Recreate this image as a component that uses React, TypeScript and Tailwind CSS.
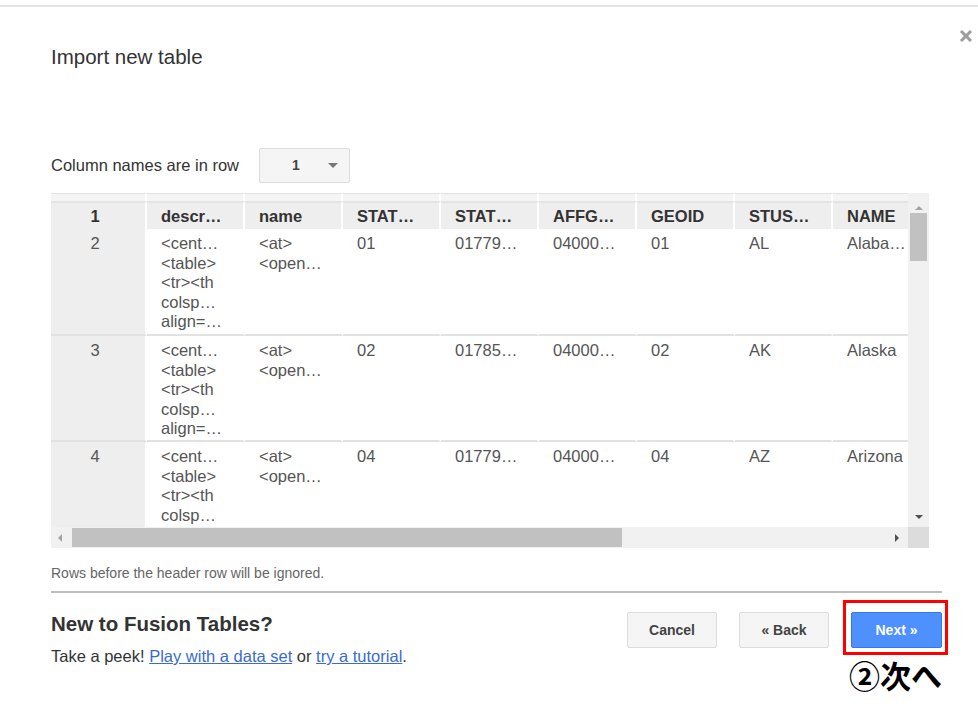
import React from 'react';

const font = { fontFamily: '"Liberation Sans", Arial, sans-serif' };

const headers = ['1', 'descr…', 'name', 'STAT…', 'STAT…', 'AFFG…', 'GEOID', 'STUS…', 'NAME'];

const descr = ['<cent…', '<table>', '<tr><th', 'colsp…', 'align=…'];
const nameCell = ['<at>', '<open…'];

const rows = [
  { n: '2', cells: ['01', '01779…', '04000…', '01', 'AL', 'Alaba…'], h: 'h-[107px]' },
  { n: '3', cells: ['02', '01785…', '04000…', '02', 'AK', 'Alaska'], h: 'h-[106px]' },
  { n: '4', cells: ['04', '01779…', '04000…', '04', 'AZ', 'Arizona'], h: 'h-[106px]' },
];

const colW = ['w-[96px]', 'w-[98px]', 'w-[98px]', 'w-[98px]', 'w-[98px]', 'w-[98px]', 'w-[98px]', 'w-[98px]', 'w-[98px]'];

function Cell({ i, children, className = '' }: { i: number; children: React.ReactNode; className?: string }) {
  return (
    <div className={`${colW[i]} shrink-0 border-r-2 border-white ${className}`}>{children}</div>
  );
}

const bodyText = 'border-b-2 border-b-[#e2e2e2] text-[16.5px] text-[#555] leading-[19.5px] pt-[5px] whitespace-nowrap';

function DataTable() {
  return (
    <div className="w-[878px] h-[355px] flex flex-col">
      <div className="flex h-[334px]">
        {/* grid */}
        <div className="w-[857px] overflow-hidden">
          <div className="w-[960px]">
            {/* top strip */}
            <div className="flex h-[8px]">
              {headers.map((_, i) => (
                <Cell key={i} i={i} className="bg-[#f5f5f5] border-t border-t-[#e2e2e2]">{null}</Cell>
              ))}
            </div>
            {/* header */}
            <div className="flex h-[28px]">
              {headers.map((h, i) => (
                <Cell
                  key={i}
                  i={i}
                  className={`bg-[#eeeeee] border-t-2 border-t-[#e4e4e4] font-bold text-[16.5px] text-[#333] leading-[26px] whitespace-nowrap ${i === 0 ? 'text-center pr-[6px]' : 'pl-[14px]'}`}
                >
                  {h}
                </Cell>
              ))}
            </div>
            {rows.map((r) => (
              <div key={r.n} className={`flex ${r.h}`}>
                <Cell i={0} className={`bg-[#eeeeee] text-center pr-[6px] ${bodyText}`}>
                  {r.n}
                </Cell>
                <Cell i={1} className={`pl-[14px] ${bodyText}`}>
                  {descr.map((d) => (
                    <div key={d}>{d}</div>
                  ))}
                </Cell>
                <Cell i={2} className={`pl-[14px] ${bodyText}`}>
                  {nameCell.map((d) => (
                    <div key={d}>{d}</div>
                  ))}
                </Cell>
                {r.cells.map((c, j) => (
                  <Cell key={j} i={j + 3} className={`pl-[14px] ${bodyText}`}>
                    {c}
                  </Cell>
                ))}
              </div>
            ))}
          </div>
        </div>
        {/* vertical scrollbar */}
        <div className="w-[21px] bg-[#f1f1f1] flex flex-col items-center">
          <svg width="10" height="6" viewBox="0 0 10 6" className="mt-[12px]">
            <path d="M1 5 L5 1 L9 5 Z" fill="#a3a3a3" />
          </svg>
          <div className="mt-[2px] w-[17px] h-[48px] bg-[#c1c1c1]" />
          <div className="flex-1" />
          <svg width="10" height="6" viewBox="0 0 10 6" className="mb-[7px]">
            <path d="M1 1 L5 5 L9 1 Z" fill="#505050" />
          </svg>
        </div>
      </div>
      {/* horizontal scrollbar */}
      <div className="flex h-[21px]">
        <div className="w-[857px] bg-[#f1f1f1] flex items-center">
          <svg width="6" height="10" viewBox="0 0 6 10" className="ml-[6px]">
            <path d="M5 1 L1 5 L5 9 Z" fill="#a3a3a3" />
          </svg>
          <div className="ml-[9px] w-[550px] h-[19px] bg-[#c1c1c1]" />
          <div className="flex-1" />
          <svg width="6" height="10" viewBox="0 0 6 10" className="mr-[8px]">
            <path d="M1 1 L5 5 L1 9 Z" fill="#505050" />
          </svg>
        </div>
        <div className="w-[21px] bg-[#dcdcdc]" />
      </div>
    </div>
  );
}

export default function App() {
  return (
    <div className="relative w-[978px] h-[709px] bg-white overflow-hidden" style={font}>
      <div className="mt-[5px] h-[2px] bg-[#e3e3e3]" />

      {/* close */}
      <button className="absolute left-[958px] top-[28px] w-[16px] h-[16px]">
        <svg width="16" height="16" viewBox="0 0 16 16">
          <path d="M3 3 L13 13 M13 3 L3 13" stroke="#9c9c9c" strokeWidth="3" />
        </svg>
      </button>

      <div className="pl-[51px] pr-[36px]">
        <h1 className="mt-[38px] text-[20.5px] leading-[24px] text-[#333]">Import new table</h1>

        <div className="mt-[79px] flex items-center">
          <span className="text-[16.5px] text-[#333]">Column names are in row</span>
          <div className="ml-[20px] w-[91px] h-[35px] bg-[#f5f5f5] border border-[#dcdcdc] rounded-[2px] flex items-center">
            <span className="ml-[32px] font-bold text-[14px] text-[#444]">1</span>
            <svg width="10" height="5" viewBox="0 0 10 5" className="ml-[28px]">
              <path d="M0 0 L10 0 L5 5 Z" fill="#777" />
            </svg>
          </div>
        </div>

        <div className="mt-[10px]">
          <DataTable />
        </div>

        <p className="mt-[17px] text-[14px] leading-[16px] text-[#666]">Rows before the header row will be ignored.</p>

        <div className="mt-[10px] h-[2px] bg-[#bdbdbd]" />

        <div className="mt-[19px] flex justify-between">
          <div>
            <h2 className="font-bold text-[20.5px] leading-[24px] text-[#333]">New to Fusion Tables?</h2>
            <p className="mt-[10px] text-[16.5px] leading-[20px] text-[#333]">
              Take a peek!{' '}
              <a className="text-[#3a6bd1] underline">Play with a data set</a> or{' '}
              <a className="text-[#3a6bd1] underline">try a tutorial</a>.
            </p>
          </div>
          <div className="flex gap-[22px]">
            <button className="w-[90px] h-[36px] bg-[#f5f5f5] border border-[#dcdcdc] rounded-[2px] font-bold text-[14px] text-[#444]">
              Cancel
            </button>
            <button className="w-[90px] h-[36px] bg-[#f5f5f5] border border-[#dcdcdc] rounded-[2px] font-bold text-[14px] text-[#444]">
              « Back
            </button>
            <div className="relative">
              <button className="w-[91px] h-[36px] bg-[#4d90fe] border border-[#3079ed] rounded-[2px] font-bold text-[14px] text-white">
                Next »
              </button>
              {/* annotation */}
              <div className="absolute left-[-8px] top-[-12px] w-[105px] h-[55px] border-[3px] border-[#ff0000]" />
              <div
                className="absolute left-[-2px] top-[44px] whitespace-nowrap font-bold text-[31px] leading-[38px] text-black"
                style={{ fontFamily: '"Noto Sans CJK JP", sans-serif' }}
              >
                ②次へ
              </div>
            </div>
          </div>
        </div>
      </div>
    </div>
  );
}
